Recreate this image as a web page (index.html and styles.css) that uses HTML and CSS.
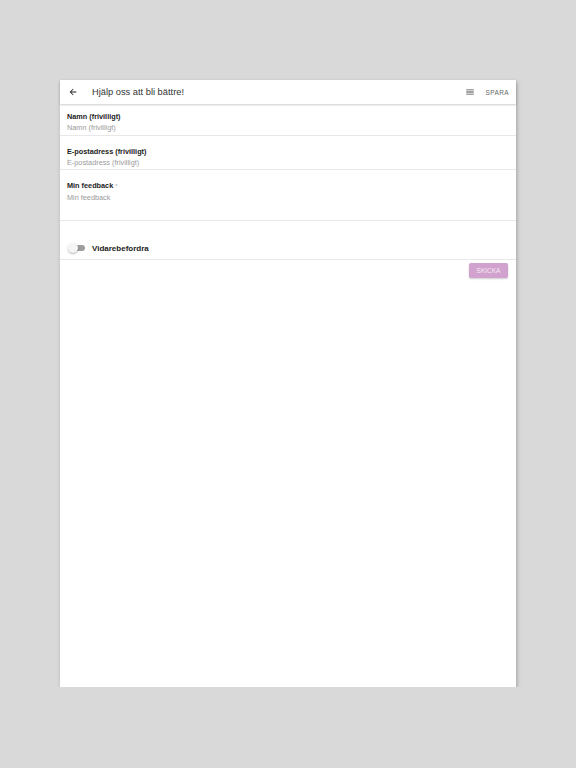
FILE: index.html
```html
<!DOCTYPE html>
<html lang="sv">
<head>
    <meta charset="UTF-8">
    <meta name="viewport" content="width=device-width, initial-scale=1.0">
    <title>Hjälp oss att bli bättre!</title>
    <link rel="stylesheet" href="styles.css">
</head>
<body>
    <div class="sheet">
        <div class="toolbar">
            <svg class="back" viewBox="0 0 24 24" width="10" height="10">
                <path d="M20 11H7.83l5.59-5.59L12 4l-8 8 8 8 1.41-1.41L7.83 13H20v-2z" fill="#222"/>
            </svg>
            <span class="title">Hjälp oss att bli bättre!</span>
            <svg class="menu" viewBox="0 0 24 24" width="10" height="10">
                <path d="M3 18h18v-2H3v2zm0-5h18v-2H3v2zm0-7v2h18V6H3z" fill="#444"/>
            </svg>
            <span class="save">SPARA</span>
        </div>

        <div class="field field-first">
            <div class="label">Namn (frivilligt)</div>
            <div class="placeholder">Namn (frivilligt)</div>
        </div>
        <div class="field">
            <div class="label">E-postadress (frivilligt)</div>
            <div class="placeholder">E-postadress (frivilligt)</div>
        </div>
        <div class="field field-area">
            <div class="label">Min feedback <span class="req">*</span></div>
            <div class="placeholder">Min feedback</div>
        </div>

        <div class="toggle-row">
            <span class="switch"><span class="knob"></span></span>
            <span class="toggle-label">Vidarebefordra</span>
        </div>

        <div class="actions">
            <button class="send">SKICKA</button>
        </div>
    </div>
</body>
</html>
```

FILE: styles.css
```css
body {
    margin: 0;
    background: #d9d9d9;
    font-family: "Liberation Sans", Arial, sans-serif;
}
.sheet {
    width: 456px;
    height: 607px;
    margin: 80px 0 0 60px;
    background: #fff;
    box-shadow: 1px 2px 4px rgba(0, 0, 0, 0.25);
}
.toolbar {
    height: 24px;
    display: flex;
    align-items: center;
    padding: 0 7px 0 8px;
    box-shadow: 0 1px 2px rgba(0, 0, 0, 0.2);
    position: relative;
}
.back {
    margin-right: 14px;
}
.title {
    flex: 1;
    font-size: 9.3px;
    color: #333;
}
.menu {
    margin-right: 10px;
}
.save {
    font-size: 6.5px;
    letter-spacing: 0.4px;
    color: #666;
}
.field {
    padding: 11px 7px 1px;
    border-bottom: 1px solid #e8e8e8;
}
.field-first {
    padding: 8px 7px 2px;
}
.label {
    font-size: 7.3px;
    font-weight: bold;
    color: #222;
    line-height: 10px;
}
.req {
    font-weight: normal;
    color: #aaa;
    font-size: 6px;
    vertical-align: top;
}
.placeholder {
    font-size: 7.3px;
    color: #9a9a9a;
    line-height: 10px;
    margin-top: 1px;
}
.field-area {
    box-sizing: border-box;
    height: 51px;
    padding-top: 11px;
}
.field-area .placeholder {
    margin-top: 2px;
}
.toggle-row {
    display: flex;
    align-items: center;
    height: 22px;
    margin-top: 16px;
    padding-left: 10px;
    border-bottom: 1px solid #e8e8e8;
}
.switch {
    position: relative;
    width: 15px;
    height: 6px;
    border-radius: 3px;
    background: #9e9e9e;
    margin-right: 7px;
}
.knob {
    position: absolute;
    left: -2px;
    top: -2px;
    width: 10px;
    height: 10px;
    border-radius: 50%;
    background: #f5f5f5;
    box-shadow: 0 1px 2px rgba(0, 0, 0, 0.3);
}
.toggle-label {
    font-size: 8px;
    font-weight: bold;
    color: #222;
}
.actions {
    display: flex;
    justify-content: flex-end;
    padding: 3px 8px 0 0;
}
.send {
    width: 39px;
    height: 15px;
    border: none;
    border-radius: 2px;
    background: #d1a2cd;
    color: #f6e8f4;
    font-family: "Liberation Sans", Arial, sans-serif;
    font-size: 6.5px;
    padding: 0;
    box-shadow: 0 1px 2px rgba(0, 0, 0, 0.2);
}
```
